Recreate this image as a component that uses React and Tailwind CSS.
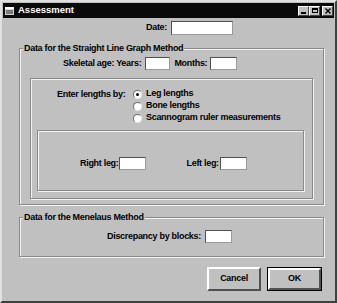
import React from "react";

function Field({ w = 27, h = 13 }) {
  return (
    <div
      className="bg-white border border-t-[#505050] border-l-[#505050] border-r-[#9a9a9a] border-b-[#9a9a9a] shrink-0"
      style={{ width: w, height: h }}
    />
  );
}

function Radio({ checked, label }) {
  return (
    <div className="flex items-center h-[12px]">
      <span className="w-[9px] h-[9px] rounded-full bg-white border border-t-[#707070] border-l-[#707070] border-r-[#e8e8e8] border-b-[#e8e8e8] flex items-center justify-center">
        {checked && <span className="w-[3px] h-[3px] rounded-full bg-black" />}
      </span>
      <span className="ml-[4px]">{label}</span>
    </div>
  );
}

function Group({ label, className, children }) {
  return (
    <div
      className={`relative border border-[#8a8a8a] shadow-[inset_1px_1px_0_#f2f2f2,1px_1px_0_#f2f2f2] ${className}`}
    >
      {label && (
        <span className="absolute left-[3px] top-[-7px] bg-[#c0c0c0] px-[1px] leading-[12px]">
          {label}
        </span>
      )}
      {children}
    </div>
  );
}

function TitleButton({ children }) {
  return (
    <div className="w-[11px] h-[10px] bg-[#c0c0c0] border border-t-white border-l-white border-r-[#404040] border-b-[#404040] flex items-center justify-center text-black">
      {children}
    </div>
  );
}

export default function App() {
  return (
    <div className="w-[337px] h-[303px] bg-[#c0c0c0] border-2 border-t-[#e0e0e0] border-l-[#e0e0e0] border-r-[#404040] border-b-[#404040] p-[1px] text-black font-bold text-[9px] tracking-[-0.3px] font-['Liberation_Sans',Arial,sans-serif] overflow-hidden">
      {/* Title bar */}
      <div className="h-[15px] bg-[#0a0a0a] flex items-center pl-[2px] pr-[1px]">
        <svg width="9" height="8" viewBox="0 0 9 8" className="shrink-0">
          <rect x="0" y="0" width="9" height="8" fill="#d0d0d0" />
          <rect x="0" y="0" width="9" height="2" fill="#ffffff" />
          <rect x="1" y="3" width="7" height="4" fill="#7a7a7a" />
        </svg>
        <span className="ml-[4px] text-white text-[9.5px] tracking-normal">Assessment</span>
        <div className="ml-auto flex items-center">
          <TitleButton>
            <span className="block w-[5px] h-[1.5px] bg-black mt-[5px]" />
          </TitleButton>
          <TitleButton>
            <span className="block w-[6px] h-[5px] border border-black border-t-2" />
          </TitleButton>
          <div className="w-[2px]" />
          <TitleButton>
            <svg width="6" height="6" viewBox="0 0 6 6">
              <path d="M0.5 0.5 L5.5 5.5 M5.5 0.5 L0.5 5.5" stroke="#000" strokeWidth="1.4" />
            </svg>
          </TitleButton>
        </div>
      </div>

      {/* Date */}
      <div className="mt-[3px] flex items-center pl-[143px] h-[14px]">
        <span>Date:</span>
        <div className="ml-[4px]">
          <Field w={62} h={14} />
        </div>
      </div>

      {/* Straight line graph method */}
      <Group
        label="Data for the Straight Line Graph Method"
        className="mt-[13px] ml-[16px] w-[305px] h-[157px]"
      >
        <div className="mt-[8px] pl-[43px] flex items-center h-[13px]">
          <span>Skeletal age: Years:</span>
          <div className="ml-[4px]">
            <Field w={25} />
          </div>
          <span className="ml-[4px]">Months:</span>
          <div className="ml-[3px]">
            <Field w={27} />
          </div>
        </div>

        <Group className="mt-[8px] ml-[10px] w-[283px] h-[121px]">
          <div className="flex pl-[26px] pt-[9px]">
            <span className="w-[76px] leading-[12px]">Enter lengths by:</span>
            <div className="flex flex-col">
              <Radio checked label="Leg lengths" />
              <Radio label="Bone lengths" />
              <Radio label="Scannogram ruler measurements" />
            </div>
          </div>

          <Group className="mt-[6px] ml-[6px] w-[267px] h-[61px]">
            <div className="pt-[26px] pl-[42px] flex items-center h-[13px] box-content">
              <span>Right leg:</span>
              <div className="ml-0">
                <Field w={27} />
              </div>
              <span className="ml-[41px]">Left leg:</span>
              <div className="ml-[1px]">
                <Field w={27} />
              </div>
            </div>
          </Group>
        </Group>
      </Group>

      {/* Menelaus method */}
      <Group
        label="Data for the Menelaus Method"
        className="mt-[12px] ml-[16px] w-[305px] h-[40px]"
      >
        <div className="pt-[12px] pl-[87px] flex items-center h-[13px] box-content">
          <span>Discrepancy by blocks:</span>
          <div className="ml-[4px]">
            <Field w={27} />
          </div>
        </div>
      </Group>

      {/* Buttons */}
      <div className="mt-[10px] flex justify-end pr-[12px] gap-[6px]">
        <button className="w-[54px] h-[24px] bg-[#c0c0c0] border-2 border-t-white border-l-white border-r-[#505050] border-b-[#505050] font-bold">
          Cancel
        </button>
        <div className="border border-black">
          <button className="w-[53px] h-[22px] bg-[#c0c0c0] border-2 border-t-white border-l-white border-r-[#505050] border-b-[#505050] font-bold block">
            OK
          </button>
        </div>
      </div>
    </div>
  );
}
